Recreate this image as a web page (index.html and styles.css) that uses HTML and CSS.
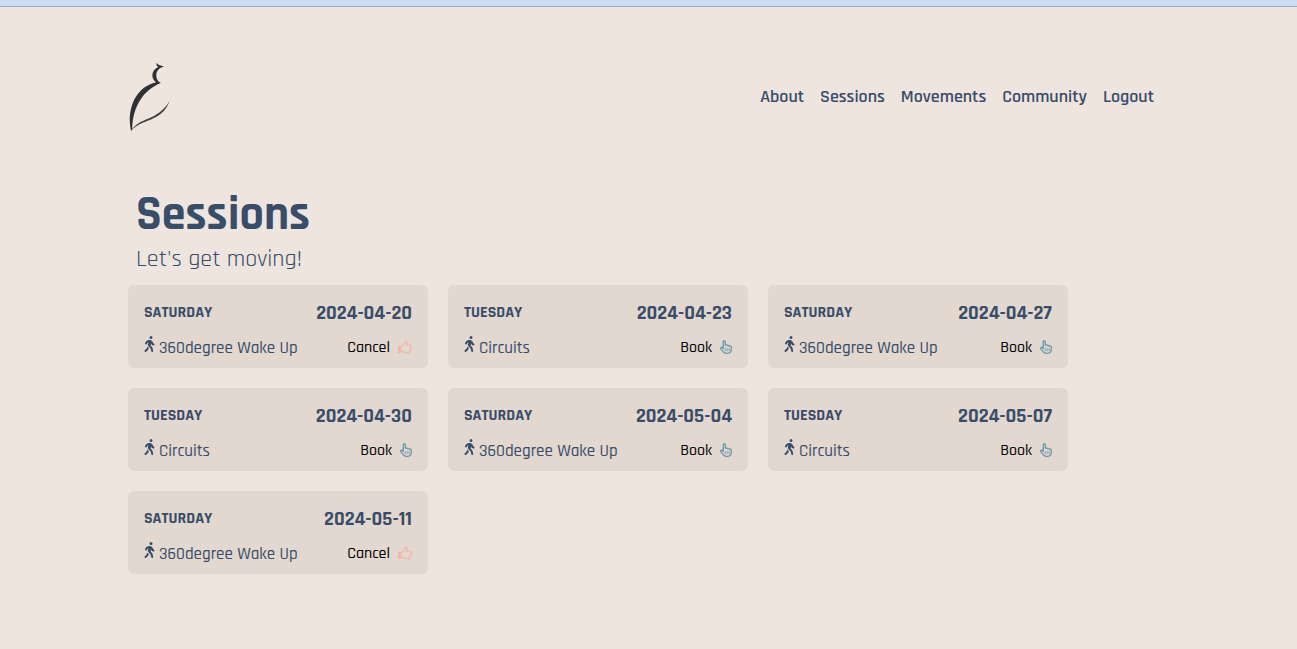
FILE: index.html
```html
<!DOCTYPE html>
<html lang="en">
<head>
<meta charset="utf-8">
<meta name="viewport" content="width=device-width, initial-scale=1">
<title>Sessions</title>
<link rel="stylesheet" href="styles.css">
</head>
<body>
<svg class="sprite" aria-hidden="true">
  <symbol id="walk" viewBox="0 0 320 512"><path fill="currentColor" d="M160 48a48 48 0 1 1 96 0 48 48 0 1 1-96 0zM126.500 199.300c-1 .4-1.900 .8-2.900 1.200l-8 3.500c-16.400 7.300-29 21.200-34.700 38.200l-2.600 7.800c-5.600 16.800-23.700 25.800-40.500 20.200s-25.800-23.700-20.200-40.500l2.600-7.800c11.400-34.100 36.600-61.900 69.400-76.500l8-3.500c20.800-9.200 43.300-14 66.100-14c44.600 0 84.800 26.800 101.900 67.900L281 232.700l21.400 10.700c15.800 7.900 22.200 27.100 14.300 42.900s-27.100 22.200-42.900 14.300L247 287.300c-10.300-5.200-18.400-13.800-22.800-24.500l-9.600-23-19.300 65.500 49.500 54c5.400 5.900 9.200 13 11.200 20.800l23 92.100c4.300 17.100-6.100 34.500-23.300 38.800s-34.500-6.100-38.800-23.300l-22-88.100-70.700-77.100c-14.800-16.100-20.300-38.600-14.700-59.700l16.900-63.500zM68.700 398l25-62.400c2.100 3 4.500 5.800 7 8.600l40.700 44.400-14.500 36.200c-2.400 6-6 11.500-10.600 16.100L54.600 502.600c-12.500 12.500-32.800 12.500-45.300 0s-12.500-32.800 0-45.300L68.700 398z"/></symbol>
  <symbol id="thumb" viewBox="0 0 14 14"><path fill="currentColor" d="M.6 5.500h2.200q.6 0 .6.600v6.300q0 .6-.6.600H.6q-.6 0-.6-.6V6.100q0-.6.600-.6z"/><path fill="none" stroke="currentColor" stroke-width="1.300" stroke-linejoin="round" stroke-linecap="round" d="M3.800 6.500C5.800 5.600 6.300 4.300 6.600 2.400 6.800 1.200 8 .9 8.700 1.700c.7.900.2 2.300-.3 3.500h3.600c1.500 0 1.800 1.700.7 2.200.8.700.4 1.700-.4 2 .4.800 0 1.600-.8 1.800.1 1-.6 1.500-1.500 1.500H8c-1.700 0-2.400-.9-4.200-1.500"/></symbol>
  <symbol id="pointer" viewBox="0 0 12 14"><path fill="none" stroke="currentColor" stroke-width="1.300" stroke-linejoin="round" stroke-linecap="round" d="M3.300 8.500V1.800c0-1.500 2-1.500 2 0v3.400c.7-.5 1.500-.3 1.900.4.700-.4 1.500-.2 1.900.5.900-.5 2.200 0 2.200 1.200v2c0 2.500-1.300 4-3.600 4H6.100c-1.200 0-2-.4-2.700-1.400L.9 8.800C.1 7.600 1.600 6.500 2.500 7.500z"/><path fill="none" stroke="currentColor" stroke-width=".8" stroke-linecap="round" d="M5.300 8.500v2.300M7.200 8.500v2.300M9.100 8.500v2.300"/></symbol>
</svg>
<div class="topbar"></div>
<header class="header">
  <a class="logo" href="#" aria-label="Home">
    <svg viewBox="0 -1 44 70" width="44" height="70" aria-hidden="true">
      <path fill="#303133" d="M28.500 0c2 2.400 4.500 2.800 7.800 3.400-4.300.7-7.700 4-8 8.400-.2 3.600 1.300 6.500 4.600 8.200C16 26.500 4.500 43 4.200 66.500L3 68C-1.500 49 6 24 28 19.500c-5.700-4.500-4.700-12.500 2.500-15.800C28.800 3.300 28.200 2 28.500 0z"/>
      <path fill="#45423f" d="M3 68C11 53.500 29 59 41.500 38 34 59.500 13 55.500 3 68z"/>
    </svg>
  </a>
  <nav class="nav">
    <a href="#">About</a>
    <a href="#">Sessions</a>
    <a href="#">Movements</a>
    <a href="#">Community</a>
    <a href="#">Logout</a>
  </nav>
</header>
<main class="main">
  <div class="intro">
    <h1>Sessions</h1>
    <p>Let's get moving!</p>
  </div>
  <section class="sessions">
    <article class="card">
      <div class="row"><h2>Saturday</h2><time>2024-04-20</time></div>
      <div class="row"><p class="name"><svg class="walk"><use href="#walk"/></svg>360degree Wake Up</p><button class="action cancel">Cancel<svg class="thumb"><use href="#thumb"/></svg></button></div>
    </article>
    <article class="card">
      <div class="row"><h2>Tuesday</h2><time>2024-04-23</time></div>
      <div class="row"><p class="name"><svg class="walk"><use href="#walk"/></svg>Circuits</p><button class="action">Book<svg class="pointer"><use href="#pointer"/></svg></button></div>
    </article>
    <article class="card">
      <div class="row"><h2>Saturday</h2><time>2024-04-27</time></div>
      <div class="row"><p class="name"><svg class="walk"><use href="#walk"/></svg>360degree Wake Up</p><button class="action">Book<svg class="pointer"><use href="#pointer"/></svg></button></div>
    </article>
    <article class="card">
      <div class="row"><h2>Tuesday</h2><time>2024-04-30</time></div>
      <div class="row"><p class="name"><svg class="walk"><use href="#walk"/></svg>Circuits</p><button class="action">Book<svg class="pointer"><use href="#pointer"/></svg></button></div>
    </article>
    <article class="card">
      <div class="row"><h2>Saturday</h2><time>2024-05-04</time></div>
      <div class="row"><p class="name"><svg class="walk"><use href="#walk"/></svg>360degree Wake Up</p><button class="action">Book<svg class="pointer"><use href="#pointer"/></svg></button></div>
    </article>
    <article class="card">
      <div class="row"><h2>Tuesday</h2><time>2024-05-07</time></div>
      <div class="row"><p class="name"><svg class="walk"><use href="#walk"/></svg>Circuits</p><button class="action">Book<svg class="pointer"><use href="#pointer"/></svg></button></div>
    </article>
    <article class="card">
      <div class="row"><h2>Saturday</h2><time>2024-05-11</time></div>
      <div class="row"><p class="name"><svg class="walk"><use href="#walk"/></svg>360degree Wake Up</p><button class="action cancel">Cancel<svg class="thumb"><use href="#thumb"/></svg></button></div>
    </article>
  </section>
</main>
</body>
</html>
```
FILE: styles.css
```css
* {
  box-sizing: border-box;
}

body {
  margin: 0;
  background: #eee5de;
  color: #374d69;
  font-family: Rajdhani, Roboto, sans-serif;
}

h1, h2, p {
  margin: 0;
}

.sprite {
  display: none;
}

.topbar {
  height: 7px;
  background: #cbddf5;
  border-bottom: 1px solid #9cadc9;
}

.header {
  display: flex;
  align-items: center;
  justify-content: space-between;
  padding: 55px 128px 0;
}

.logo svg {
  display: block;
}

.nav {
  display: flex;
  gap: 16px;
  padding-right: 15px;
}

.nav a {
  color: inherit;
  font-size: 18px;
  font-weight: 600;
  line-height: 24px;
  text-decoration: none;
}

.main {
  padding: 55px 128px 64px;
}

.intro {
  padding: 0 8px 10px;
}

h1 {
  font-size: 48px;
  font-weight: 700;
  line-height: 56px;
}

.intro p {
  font-size: 24px;
  font-weight: 400;
  line-height: 32px;
}

.sessions {
  display: grid;
  grid-template-columns: repeat(auto-fill, 300px);
  gap: 20px;
}

.card {
  display: grid;
  gap: 11px;
  padding: 16px 16px 8px;
  border-radius: 6px;
  background: #e2d8cf;
}

.row {
  display: flex;
  align-items: center;
  justify-content: space-between;
  line-height: 24px;
}

.card h2 {
  font-size: 16px;
  font-weight: 700;
  line-height: 24px;
  text-transform: uppercase;
}

.card time {
  font-size: 20px;
  font-weight: 700;
}

.name {
  display: flex;
  gap: 4px;
  font-size: 17px;
  font-weight: 500;
}

.walk {
  width: 11px;
  height: 16px;
}

.action {
  display: flex;
  align-items: center;
  gap: 8px;
  padding: 0;
  border: 0;
  background: none;
  color: #000;
  font: inherit;
  font-size: 16px;
  font-weight: 500;
  cursor: pointer;
}

.action svg {
  margin-bottom: 2px;
}

.thumb {
  width: 14px;
  height: 14px;
  color: #f2b6aa;
}

.pointer {
  width: 12px;
  height: 14px;
  color: #6799aa;
}
```
